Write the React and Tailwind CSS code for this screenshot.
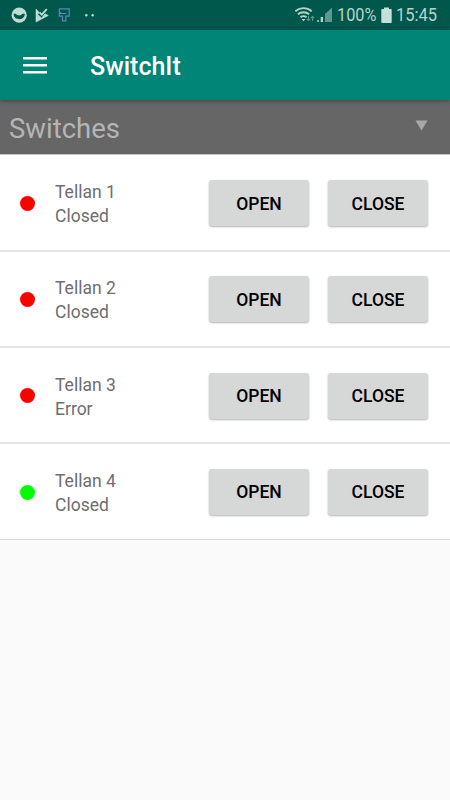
const switches = [
  { id: 1, name: "Tellan 1", status: "Closed", color: "bg-[#fe0000]" },
  { id: 2, name: "Tellan 2", status: "Closed", color: "bg-[#fe0000]" },
  { id: 3, name: "Tellan 3", status: "Error", color: "bg-[#fe0000]" },
  { id: 4, name: "Tellan 4", status: "Closed", color: "bg-[#00fe00]" },
]

function StatusBar() {
  return (
    <div className="flex h-[30px] items-center justify-between bg-[#00574b] text-[#b6d3ce]">
      <svg width="110" height="30" viewBox="0 0 110 30" fill="none">
        <circle cx="19.2" cy="15.2" r="7.6" fill="#bcdcd4" />
        <path d="M13.600 14.200q1-1.200 2.300-.2 3.300 2.800 6.600 0 1.300-1 2.300.2c-.6 6.600-10.600 6.600-11.200 0z" fill="#00574b" />
        <path d="M36 9v13l12.300-6.400-3.300-1.800-3.500 4.200-3.900-3.700 1.800-1.800z" fill="#bcdcd4" stroke="#bcdcd4" strokeWidth=".6" strokeLinejoin="round" />
        <path d="M39.500 12.300l2.300 2.300 5-5.400" stroke="#bcdcd4" strokeWidth="1.800" />
        <path d="M59.300 8.800h9.900v7.400h-3.400v4.600h-3.300v-4.600h-3.200v-2.700h7M59.300 8.800v3.700h1.500" stroke="#5c88b8" strokeWidth="1.200" />
        <circle cx="86.300" cy="15.200" r="1.200" fill="#bcdcd4" />
        <circle cx="92.700" cy="15.200" r="1.200" fill="#bcdcd4" />
      </svg>
      <div className="flex items-center pr-[12px]">
        <svg width="43" height="30" viewBox="0 0 43 30" fill="none">
          <path d="M.3 11.200a12.500 12.500 0 0 1 16.400 0M2.900 14.300a8.700 8.700 0 0 1 11.200 0M5.500 17.300a4.700 4.700 0 0 1 6 0" stroke="#b6d3ce" strokeWidth="1.800" />
          <path d="M6.500 18.900h4l-2 2.400z" fill="#b6d3ce" />
          <path d="M13.500 16v4.500m-1.700-1.700l1.700 1.700 1.700-1.700M17.500 21v-4.500m-1.700 1.700l1.700-1.700 1.700 1.700" stroke="#5f978e" strokeWidth="1.100" />
          <path d="M22.300 20h1.500v2h-1.500zM25.700 17H28v5h-2.300z" fill="#b6d3ce" />
          <path d="M30 13.800l2.700-2.400V22H30zM32.700 11.400L37 7.500V22h-4.300z" fill="#5f978e" />
        </svg>
        <span className="-ml-px w-[40px] origin-left scale-x-[0.880] whitespace-nowrap text-[18.500px] leading-[30px]">100%</span>
        <svg className="ml-[4px]" width="11" height="30" viewBox="0 0 11 30" fill="#c6dfda">
          <path d="M3 7.500h5V9h2q.7 0 .7.700v12.600q0 .7-.7.700H1q-.7 0-.7-.7V9.700Q.3 9 1 9h2z" />
        </svg>
        <span className="ml-[4px] w-[42px] origin-left scale-x-[0.890] whitespace-nowrap text-[18.500px] leading-[30px]">15:45</span>
      </div>
    </div>
  )
}

function SwitchRow({ item }) {
  return (
    <li className="flex h-[96.250px] items-center border-b-2 border-[#e4e4e4] bg-white pt-[1px] pr-[22px] pl-[20px] last:h-[95.500px] last:border-b last:border-[#dadada]">
      <span className={`size-[15px] rounded-full ${item.color}`}></span>
      <div className="ml-[20px] flex-1 pt-[2px] text-[17.500px] leading-[24px] text-[#6e6e6e]">
        <p>{item.name}</p>
        <p>{item.status}</p>
      </div>
      <div className="flex gap-[19px] text-[17.500px] font-medium text-black">
        <button className="h-[46px] w-[100px] rounded-[3px] bg-[#d6d7d7] pt-[1px] shadow-[0_1px_2px_rgba(0,0,0,0.3)]">OPEN</button>
        <button className="h-[46px] w-[100px] rounded-[3px] bg-[#d6d7d7] pt-[1px] shadow-[0_1px_2px_rgba(0,0,0,0.3)]">CLOSE</button>
      </div>
    </li>
  )
}

export default function App() {
  return (
    <div className="h-screen overflow-hidden bg-[#fafafa] font-['Roboto',sans-serif]">
      <StatusBar />
      <header className="relative flex h-[70px] items-center bg-[#008577] pl-[23px] text-white shadow-[0_1px_4px_rgba(0,0,0,0.35)]">
        <svg width="24" height="17" viewBox="0 0 24 17" fill="currentColor">
          <path d="M0 0h24v2.500H0zM0 7h24v2.500H0zM0 14h24v2.500H0z" />
        </svg>
        <h1 className="ml-[43px] pt-[3px] text-[25px] font-medium">SwitchIt</h1>
      </header>
      <div className="flex h-[54px] items-center justify-between bg-[#666] pr-[22px] pl-[9px]">
        <span className="pt-[4px] text-[27.500px] text-[#b5b5b5]">Switches</span>
        <svg width="13" height="11" viewBox="0 0 13 11" fill="#a8a8a8" className="mb-[3px]">
          <path d="M.5.500h12l-6 10z" />
        </svg>
      </div>
      <ul className="border-t border-[#c4c4c4] bg-white pt-[0.500px]">
        {switches.map((item) => (
          <SwitchRow key={item.id} item={item} />
        ))}
      </ul>
    </div>
  )
}
